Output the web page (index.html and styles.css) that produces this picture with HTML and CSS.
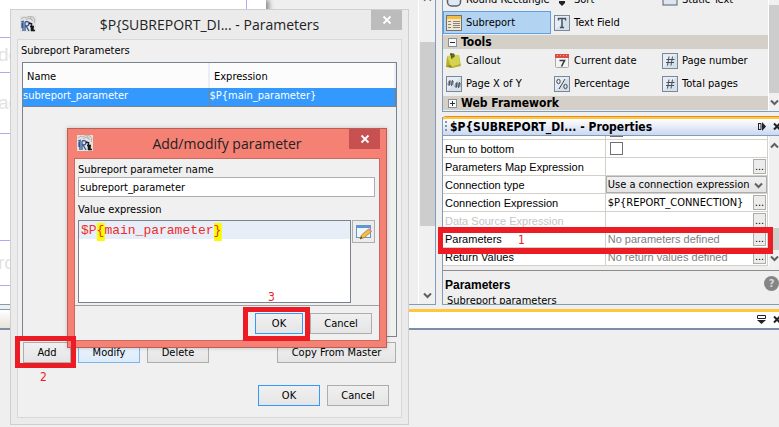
FILE: index.html
```html
<!DOCTYPE html>
<html lang="en">
<head>
    <meta charset="UTF-8">
    <meta name="viewport" content="width=device-width, initial-scale=1.0">
    <title>Subreport Parameters</title>
    <link rel="stylesheet" href="styles.css">
</head>
<body>

<svg class="symbols" aria-hidden="true">
    <symbol id="app" viewBox="0 0 16 16">
        <rect width="16" height="16" fill="#e4e2e0"/>
        <path d="M1 3l3-2 2 1 3-2 4 1 2 3-1 3M6 4l3-2 3 2M10 1l3 4" fill="none" stroke="#b4b2b0"/>
        <path d="M3 15V6M1 6l3-1M2 7v5M5 6q4-1 4 1.500t-3 2.500l3 5M5 6v9" fill="none" stroke="#2f5690" stroke-width="1.300"/>
        <path d="M9 7l3 1M11.500 7v8M10 10.500h4M11 14.500h4M13 11v3" fill="none" stroke="#181818" stroke-width="1.500"/>
    </symbol>
    <symbol id="close" viewBox="0 0 10 10">
        <path d="M1.500 1.500l7 7M8.500 1.500l-7 7" fill="none" stroke="#fff" stroke-width="1.800"/>
    </symbol>
    <symbol id="up" viewBox="0 0 9 9">
        <path d="M1 6.500l3.500-3.500 3.500 3.500" fill="none" stroke="#606060" stroke-width="2"/>
    </symbol>
    <symbol id="down" viewBox="0 0 9 9">
        <path d="M1 2.500l3.500 3.500 3.500-3.500" fill="none" stroke="#606060" stroke-width="2"/>
    </symbol>
    <symbol id="tile" viewBox="0 0 16 16">
        <rect x=".5" y=".5" width="15" height="15" fill="#e6edf6" stroke="#7d8894"/>
        <path d="M1 15L15 1v14z" fill="#d5e0ed"/>
    </symbol>
    <symbol id="hash" viewBox="0 0 16 16">
        <use href="#tile"/>
        <path d="M7 3.500L5.500 12.500M10.500 3.500L9 12.500M4.500 6.500h8M4 9.500h8" fill="none" stroke="#4a4f57"/>
    </symbol>
</svg>

<div class="ide">
    <main class="editor">
        <div class="page">
            <span class="band title"></span>
            <span class="band header">de</span>
            <span class="band column">ac</span>
            <span class="band detail"></span>
            <span class="band footer">ro</span>
        </div>
        <div class="scrollbar">
            <svg class="arrow"><use href="#up"/></svg>
            <div class="thumb"></div>
            <svg class="arrow"><use href="#down"/></svg>
        </div>
    </main>

    <aside class="side">
        <section class="palette">
            <div class="palette-list">
                <div class="items">
                    <button class="item"><svg viewBox="0 0 16 16"><rect x="1.500" y="2" width="13" height="12" rx="4" fill="#dfe8f3" stroke="#59616d" stroke-width="1.500"/></svg>Round Rectangle</button>
                    <button class="item"><svg viewBox="0 0 16 16"><path d="M5 9h6v2l-3 3-3-3z" fill="#222"/></svg>Sort</button>
                    <button class="item"><svg viewBox="0 0 16 16"><rect x="1" y="2" width="14" height="11" fill="#dde5ef" stroke="#59616d"/></svg>Static Text</button>
                    <button class="item selected"><svg viewBox="0 0 16 16"><rect x=".5" y=".5" width="15" height="15" fill="#efe6d2" stroke="#77736b"/><path d="M1 1h14v3H1z" fill="#f9bd3c"/><path d="M2 6.500h3M2 9.500h3M2 12.500h3M7 6.500h7M7 8.500h7M7 10.500h7M7 12.500h7" stroke="#8c8474"/></svg>Subreport</button>
                    <button class="item"><svg viewBox="0 0 16 16"><use href="#tile"/><path d="M4.500 5.500v-2h7v2M8 3.500v9M6 12.500h4" fill="none" stroke="#46505e" stroke-width="1.500"/></svg>Text Field</button>
                </div>
                <h2 class="group"><svg viewBox="0 0 9 9"><rect x=".5" y=".5" width="8" height="8" fill="#fafafa" stroke="#8d8d8d"/><path d="M2 4.500h5" stroke="#234"/></svg>Tools</h2>
                <div class="items">
                    <button class="item"><svg viewBox="0 0 16 16"><path d="M1 3l12-1 2 11-9 2-6-1z" fill="#b5b02c"/><path d="M1 3l12-1 1 9-9 3z" fill="#d6d252"/><path d="M5 0l1 6M4 1h4v3H5" stroke="#4b5510" fill="#75802a"/><path d="M0 13l5-1 1 3z" fill="#8b891b"/></svg>Callout</button>
                    <button class="item"><svg viewBox="0 0 16 16"><rect x="1.500" y="1.500" width="13" height="13" rx="1" fill="#f4f4f4" stroke="#aaa"/><path d="M1 1h14v4H1z" fill="#d94f43"/><path d="M3 2.500h10" stroke="#f2aaa2" stroke-dasharray="1 2"/><path d="M5.500 7.500h5l-3 6" fill="none" stroke="#3b3b3b" stroke-width="1.600"/></svg>Current date</button>
                    <button class="item"><svg><use href="#hash"/></svg>Page number</button>
                    <button class="item"><svg viewBox="0 0 16 16"><use href="#tile"/><path d="M4 4L3 10M6.500 4l-1 6M2 6h6M1.500 8h6M11 6l-1 6M13.500 6l-1 6M9 8h6M8.500 10h6" fill="none" stroke="#4a4f57"/></svg>Page X of Y</button>
                    <button class="item"><svg viewBox="0 0 16 16"><use href="#tile"/><path d="M11 3L5 13" stroke="#444"/><ellipse cx="4.500" cy="5.500" rx="1.700" ry="2.200" fill="none" stroke="#444"/><ellipse cx="11.500" cy="10.500" rx="1.700" ry="2.200" fill="none" stroke="#444"/></svg>Percentage</button>
                    <button class="item"><svg><use href="#hash"/></svg>Total pages</button>
                </div>
                <h2 class="group"><svg viewBox="0 0 9 9"><rect x=".5" y=".5" width="8" height="8" fill="#fafafa" stroke="#8d8d8d"/><path d="M2 4.500h5M4.500 2v5" stroke="#234"/></svg>Web Framework</h2>
            </div>
            <div class="scrollbar narrow">
                <div class="thumb"></div>
                <svg class="arrow"><use href="#down"/></svg>
            </div>
        </section>

        <section class="properties">
            <h1 class="panel-title">
                <span class="grip"></span>
                $P{SUBREPORT_DI... - Properties
                <svg class="dock" viewBox="0 0 9 9"><path d="M1.500 1v7M1 1.500h3v6H1" fill="none" stroke="#222"/><path d="M5 0l4 4.500L5 9z" fill="#222"/></svg>
                <svg class="dock edge" viewBox="0 0 9 9"><path d="M1 1.500l6 6M7 1.500l-6 6" stroke="#222" stroke-width="2"/></svg>
            </h1>
            <div class="sheet">
                <div class="sheet-view">
                    <table class="props">
                        <tr><th></th><td><input type="checkbox" aria-label="Using cache"></td></tr>
                        <tr><th><label for="run">Run to bottom</label></th><td><input type="checkbox" id="run"></td></tr>
                        <tr><th>Parameters Map Expression</th><td><div class="cell"><span></span><button class="more">...</button></div></td></tr>
                        <tr><th><label for="ctype">Connection type</label></th><td><div class="combo"><select id="ctype"><option>Use a connection expression</option></select><svg class="arrow"><use href="#down"/></svg></div></td></tr>
                        <tr><th>Connection Expression</th><td><div class="cell ui"><span>$P{REPORT_CONNECTION}</span><button class="more">...</button></div></td></tr>
                        <tr class="disabled"><th>Data Source Expression</th><td><div class="cell"><span></span><button class="more">...</button></div></td></tr>
                        <tr><th>Parameters</th><td><div class="cell muted"><span>No parameters defined</span><button class="more">...</button></div></td></tr>
                        <tr><th>Return Values</th><td><div class="cell muted"><span>No return values defined</span><button class="more">...</button></div></td></tr>
                    </table>
                </div>
                <div class="scrollbar narrow">
                    <svg class="arrow"><use href="#up"/></svg>
                    <div class="thumb"></div>
                    <svg class="arrow"><use href="#down"/></svg>
                </div>
            </div>
            <div class="description">
                <div>
                    <h3>Parameters</h3>
                    <p>Subreport parameters</p>
                </div>
                <button class="help">?</button>
            </div>
        </section>
    </aside>
</div>

<footer class="output">
    <div class="output-tab"></div>
    <div class="output-bar">
        <svg class="dock" viewBox="0 0 9 9"><path d="M.5 .5h8v3h-8z" fill="none" stroke="#222"/><path d="M0 5h9L4.500 9z" fill="#222"/></svg>
        <svg class="dock edge" viewBox="0 0 9 9"><path d="M1 1.500l6 6M7 1.500l-6 6" stroke="#222" stroke-width="2"/></svg>
    </div>
</footer>

<section class="dialog parameters">
    <header class="titlebar">
        <svg class="app-icon"><use href="#app"/></svg>
        <h1>$P{SUBREPORT_DI... - Parameters</h1>
        <button class="close" aria-label="Close"><svg><use href="#close"/></svg></button>
    </header>
    <div class="client">
        <h2 class="label">Subreport Parameters</h2>
        <div class="list">
            <table class="grid">
                <thead><tr><th>Name</th><th>Expression</th></tr></thead>
                <tbody><tr><td>subreport_parameter</td><td>$P{main_parameter}</td></tr></tbody>
            </table>
        </div>
        <div class="actions">
            <button class="btn small">Add</button>
            <button class="btn hover">Modify</button>
            <button class="btn">Delete</button>
            <button class="btn copy">Copy From Master</button>
        </div>
        <div class="confirm">
            <button class="btn default">OK</button>
            <button class="btn">Cancel</button>
        </div>
    </div>
</section>

<section class="dialog modify">
    <header class="titlebar">
        <svg class="app-icon"><use href="#app"/></svg>
        <h1>Add/modify parameter</h1>
        <button class="close" aria-label="Close"><svg><use href="#close"/></svg></button>
    </header>
    <div class="client">
        <div class="form">
            <label class="label" for="name">Subreport parameter name</label>
            <input class="name" type="text" id="name" value="subreport_parameter">
            <label class="label" for="expr">Value expression</label>
            <div class="expression">
                <textarea id="expr" spellcheck="false">$P{main_parameter}</textarea>
                <button class="edit" aria-label="Edit expression">
                    <svg viewBox="0 0 16 16"><rect x=".5" y="1.500" width="14" height="12" fill="#eef6ff" stroke="#6c93c6"/><path d="M1 2h13v2H1z" fill="#5d94da"/><path d="M4 15l1.500-4 7-6 3 2.500-7 6z" fill="#f0bd4b" stroke="#a87420" stroke-width=".7"/><path d="M12 5.500l1.500-1 2 2-1 1.500z" fill="#e08a8a"/><path d="M4 15l1-2.500 1.500 1.500z" fill="#443"/></svg>
                </button>
            </div>
        </div>
        <div class="confirm">
            <button class="btn small default">OK</button>
            <button class="btn">Cancel</button>
        </div>
    </div>
</section>

<!-- numbered steps -->
<div class="step one"><span>1</span></div>
<div class="step two"><span>2</span></div>
<div class="step three"><span>3</span></div>

<script>
    const nameField = document.getElementById('name');
    nameField.focus();
    nameField.setSelectionRange(nameField.value.length, nameField.value.length);
</script>

</body>
</html>
```
FILE: styles.css
```css
* {
    box-sizing: border-box;
}
body {
    position: relative;
    display: flex;
    flex-direction: column;
    height: 100vh;
    margin: 0;
    overflow: hidden;
    background: #efefef;
    color: #000;
    font-family: "DejaVu Sans Condensed", "DejaVu Sans", sans-serif;
    font-size: 11px;
    line-height: 14px;
}
h1, h2, h3, p {
    margin: 0;
    font-size: inherit;
    font-weight: normal;
}
button, input, select, textarea {
    margin: 0;
    padding: 0;
    font: inherit;
    color: inherit;
}
svg {
    flex: none;
}
.symbols {
    position: absolute;
    width: 0;
    height: 0;
}

/* main window */
.ide {
    display: flex;
    gap: 6px;
    flex: none;
    height: 305px;
}
.editor {
    display: flex;
    flex: 1;
    justify-content: space-between;
    border: solid #7f9db9;
    border-width: 0 1px 1px 0;
}
.page {
    display: flex;
    flex-direction: column;
    width: 266px;
    background: linear-gradient(#aaaaff, #aaaaff) 246px 0 / 1px 100% no-repeat #fff;
    box-shadow: 3px 0 5px #888;
    clip-path: inset(0 -8px 0 0);
    color: #e2e2e2;
    font-family: "Liberation Sans", Arial, sans-serif;
    font-size: 19px;
    line-height: 24px;
}
.band {
    display: flex;
    flex: none;
    align-items: center;
    border-bottom: 1px solid #aaaaff;
    text-indent: -2px;
}
.title {
    height: 38px;
}
.header {
    height: 35px;
}
.column {
    height: 61px;
}
.detail {
    height: 107px;
}
.footer {
    height: 45px;
}
.scrollbar {
    display: flex;
    flex: none;
    flex-direction: column;
    justify-content: space-between;
    align-items: center;
    width: 17px;
    border-left: 1px solid #fff;
    background: #f0f0f0;
}
.scrollbar .thumb {
    width: 15px;
    height: 184px;
    margin-bottom: 26px;
    background: #cdcdcd;
}
.arrow {
    width: 9px;
    height: 9px;
}
.editor .arrow:first-child {
    margin-top: -6px;
}
.editor .arrow:last-child {
    margin-bottom: 4px;
}
.side {
    display: flex;
    flex-direction: column;
    gap: 5px;
    flex: none;
    width: 337px;
}

/* palette */
.palette {
    display: flex;
    height: 112px;
    overflow: hidden;
    border: solid #7f9db9;
    border-width: 0 0 1px 1px;
}
.palette-list {
    display: flex;
    flex: 1;
    flex-direction: column;
    justify-content: flex-end;
    padding-bottom: 1px;
}
.items {
    display: grid;
    grid-template-columns: repeat(3, 108px);
    margin-bottom: 1px;
}
.item {
    display: flex;
    align-items: center;
    gap: 4px;
    height: 23px;
    padding: 0 2px;
    border: 1px solid transparent;
    background: none;
    white-space: nowrap;
}
.item svg {
    width: 16px;
    height: 16px;
}
.item.selected {
    border-color: #5e9ee2;
    background: #b2d4f2;
}
.group {
    display: flex;
    align-items: center;
    gap: 4px;
    height: 15px;
    padding-left: 5px;
    background: #d4d0c8;
    font-size: 12px;
    font-weight: bold;
}
.group svg {
    width: 9px;
    height: 9px;
}
.narrow {
    width: 11px;
    overflow: hidden;
}
.palette .thumb {
    height: 88px;
    margin: 5px 0 0;
}
.palette .arrow {
    margin-bottom: 4px;
}

/* properties */
.properties {
    display: flex;
    flex: 1;
    flex-direction: column;
    min-height: 0;
    border-left: 1px solid #7f9db9;
}
.panel-title {
    display: flex;
    flex: none;
    align-items: center;
    height: 19px;
    padding: 0 2px 1px;
    border-top: 2px solid #ffc73c;
    border-bottom: 1px solid #7f9db9;
    border-top-left-radius: 3px;
    box-shadow: 0 -1px #e68b2c;
    background: linear-gradient(#fff, #cbd8f0);
    font-size: 12px;
    font-weight: bold;
    white-space: nowrap;
}
.grip {
    width: 2px;
    height: 11px;
    margin-right: 3px;
    background: repeating-linear-gradient(#8a93a3 0 2px, transparent 2px 4px);
}
.dock {
    width: 9px;
    height: 9px;
    margin-left: auto;
}
.dock.edge {
    margin-left: 7px;
    margin-right: -5px;
}
.sheet {
    display: flex;
    height: 130px;
}
.sheet-view {
    display: flex;
    flex: 1;
    align-items: flex-end;
    overflow: hidden;
    background: #fff;
}
.props {
    width: 100%;
    table-layout: fixed;
    border-collapse: collapse;
    border-right: 1px solid #d4d0c8;
    font-family: "Liberation Sans", Arial, sans-serif;
}
.props th, .props td {
    height: 18px;
    padding: 0;
    border-bottom: 1px solid #d4d0c8;
    line-height: 16px;
    text-align: left;
    font-weight: normal;
    white-space: nowrap;
}
.props th {
    padding-left: 2px;
    border-right: 1px solid #d4d0c8;
}
.props input {
    display: block;
    width: 13px;
    height: 13px;
    margin-left: 4px;
    appearance: none;
    border: 1px solid #707070;
    background: #fff;
}
.props .disabled th {
    color: #c4c4c4;
}
.cell {
    display: flex;
    align-items: center;
    justify-content: space-between;
    height: 17px;
    padding: 0 1px 0 2px;
}
.cell.ui, .combo {
    font-family: "DejaVu Sans Condensed", "DejaVu Sans", sans-serif;
}
.cell.muted {
    color: #808080;
}
.more {
    width: 13px;
    height: 15px;
    border: 1px solid #adadad;
    background: #ececec;
    color: #000;
    font-size: 11px;
    line-height: 11px;
}
.combo {
    position: relative;
    height: 17px;
}
.combo select {
    display: block;
    width: 100%;
    height: 17px;
    padding-left: 1px;
    appearance: none;
    border: 1px solid #adadad;
    border-radius: 0;
    background: linear-gradient(#f0f0f0, #e4e4e4);
}
.combo .arrow {
    position: absolute;
    right: 4px;
    top: 5px;
}
.sheet .thumb {
    height: 22px;
    margin: 83px 0 0;
}
.sheet .arrow:first-child {
    margin-top: 5px;
    margin-bottom: -10px;
}
.sheet .arrow:last-child {
    margin-bottom: 3px;
}
.description {
    display: flex;
    justify-content: space-between;
    flex: 1;
    min-height: 0;
    margin-top: 4px;
    padding: 7px 0 0 2px;
    border-top: 1px solid #8c8c8c;
    border-bottom: 1px solid #7f9db9;
    overflow: hidden;
}
.description h3 {
    font-family: "Liberation Sans", Arial, sans-serif;
    font-size: 12px;
    font-weight: bold;
}
.description p {
    padding: 2px 0 0 2px;
}
.help {
    width: 15px;
    height: 15px;
    margin-top: -2px;
    border: 0;
    border-radius: 50%;
    background: #858585;
    color: #d8d8d8;
    font-weight: bold;
    line-height: 15px;
}

/* output strip */
.output {
    display: flex;
    flex: none;
    height: 21px;
    margin-top: 4px;
    border-bottom: 2px solid #7b8ea6;
}
.output-tab {
    width: 10px;
    border-top: 1px solid #7f9db9;
    background: linear-gradient(#fff, #e6e3da);
}
.output-bar {
    display: flex;
    flex: 1;
    align-items: center;
    padding: 0 2px 2px 0;
    border-top: 3px solid #ffc73c;
    background: #fff;
}

/* dialogs */
.dialog {
    position: absolute;
    display: flex;
    flex-direction: column;
    padding: 0 6px 6px;
    border: 1px solid #cfcfcf;
    background: #ebebeb;
}
.parameters {
    left: 10px;
    top: 9px;
    width: 399px;
    height: 416px;
}
.modify {
    left: 67px;
    top: 128px;
    width: 320px;
    height: 220px;
    border-color: #b95f56;
    background: #f58174;
    box-shadow: 0 0 4px rgba(0, 0, 0, 0.2);
}
.titlebar {
    display: grid;
    grid-template-columns: 31px 1fr 31px;
    flex: none;
    height: 29px;
    padding: 0;
}
.titlebar h1 {
    color: #222;
    font-family: "Open Sans", "Segoe UI", sans-serif;
    font-size: 14px;
    line-height: 30px;
    text-align: center;
    white-space: nowrap;
}
.app-icon {
    width: 16px;
    height: 16px;
    margin: 6px 0 0 3px;
}
.close {
    display: grid;
    place-items: center;
    height: 20px;
    border: 0;
    background: #bcbcbc;
}
.close svg {
    width: 10px;
    height: 10px;
}
.modify .close {
    background: #c75050;
}
.client {
    display: flex;
    flex: 1;
    flex-direction: column;
    border: 1px solid #d8d8d8;
    background: #f0f0f0;
}
.modify .client {
    border-color: #c9695f;
}
.label {
    display: block;
    line-height: 14px;
}
.parameters .client {
    padding: 4px;
}
.parameters .label {
    margin-left: -1px;
}
.list {
    height: 275px;
    margin-top: 4px;
    border: 1px solid #7a828c;
}
.grid {
    width: 100%;
    table-layout: fixed;
    border-collapse: collapse;
}
.grid th {
    height: 25px;
    padding: 3px 4px 0;
    border-right: 2px solid #e8eff8;
    background: #fcfcfc;
    font-weight: normal;
    text-align: left;
}
.grid td {
    height: 18px;
    padding: 0 1px 1px 0;
    border-right: 1px solid #7a828c;
    border-bottom: 1px solid #7a828c;
    background: #3399ff;
    color: #fff;
}
.actions, .confirm {
    display: flex;
    gap: 7px;
}
.actions {
    margin: 5px 1px 0;
}
.btn {
    width: 62px;
    height: 21px;
    border: 1px solid #adadad;
    background: linear-gradient(#f0f0f0, #e5e5e5);
}
.btn.default {
    border-color: #3399ff;
}
.btn.hover {
    border-color: #7eb4ea;
    background: linear-gradient(#ecf4fc, #dcecfc);
}
.btn.copy {
    width: 119px;
    margin-left: auto;
}
.btn.small {
    width: 48px;
}
.parameters .confirm {
    justify-content: flex-end;
    margin-top: 22px;
    padding-right: 8px;
}
.form {
    height: 147px;
    padding: 4px 4px 0 3px;
    border-bottom: 1px solid #a0a0a0;
}
.name {
    display: block;
    width: 100%;
    height: 20px;
    margin-bottom: 6px;
    padding: 0 1px;
    border: 1px solid #abadb3;
    outline: none;
    background: #fff;
}
.expression {
    display: flex;
    align-items: flex-start;
    gap: 1px;
    margin-top: 3px;
}
.expression textarea {
    flex: 1;
    height: 83px;
    padding: 2px;
    resize: none;
    border: 1px solid #7a828c;
    /* current line and matching braces */
    background:
        linear-gradient(#f8fc00, #f8fc00) 2ch 0 / 1ch 18px no-repeat content-box border-box,
        linear-gradient(#f8fc00, #f8fc00) 17ch 0 / 1ch 18px no-repeat content-box border-box,
        linear-gradient(#e8eef7, #e8eef7) 0 0 / 100% 18px no-repeat,
        #fff;
    color: #ee2c2c;
    font-family: "Liberation Mono", "Courier New", monospace;
    font-size: 13px;
    line-height: 16px;
}
.edit {
    display: grid;
    place-items: center;
    width: 23px;
    height: 23px;
    border: 1px solid #adadad;
    background: #ececec;
}
.edit svg {
    width: 16px;
    height: 16px;
}
.modify .confirm {
    justify-content: flex-end;
    padding: 7px 7px 0 0;
}

/* red frames with their step numbers */
.step {
    position: absolute;
    border: 5px solid #ed1c24;
    color: #ed1c24;
    font-size: 12px;
}
.step span {
    position: absolute;
}
.one {
    left: 438px;
    top: 227px;
    width: 335px;
    height: 27px;
    border-width: 6px 5px;
}
.one span {
    left: 75px;
    top: 0;
}
.two {
    left: 15px;
    top: 336px;
    width: 61px;
    height: 32px;
}
.two span {
    left: 20px;
    top: 29px;
}
.three {
    left: 243px;
    top: 307px;
    width: 67px;
    height: 34px;
}
.three span {
    left: 20px;
    top: -22px;
}
```
